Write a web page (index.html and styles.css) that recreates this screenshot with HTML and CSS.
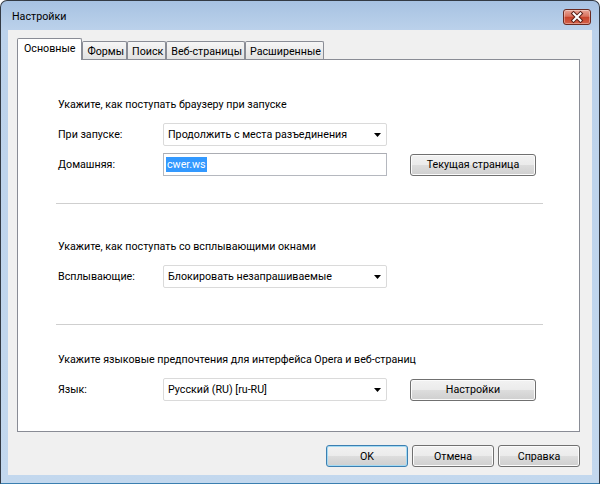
FILE: index.html
```html
<!DOCTYPE html>
<html lang="ru">
<head>
<meta charset="utf-8">
<title>Настройки</title>
<link rel="stylesheet" href="styles.css">
</head>
<body>
<div class="window">
  <div class="titlebar">
    <span class="title">Настройки</span>
    <div class="close">
      <svg width="26" height="14" viewBox="0 0 26 14">
        <path d="M9.5 3.5 L16.5 10.5 M16.5 3.5 L9.5 10.5" stroke="#5a2018" stroke-width="4" stroke-linecap="square" fill="none"/>
        <path d="M9.5 3.5 L16.5 10.5 M16.5 3.5 L9.5 10.5" stroke="#ffffff" stroke-width="2" stroke-linecap="square" fill="none"/>
      </svg>
    </div>
  </div>
  <div class="client">
    <div class="tabs">
      <div class="tab active">Основные</div>
      <div class="tab">Формы</div>
      <div class="tab">Поиск</div>
      <div class="tab">Веб-страницы</div>
      <div class="tab">Расширенные</div>
    </div>
    <div class="panel">
      <section class="group group-first">
        <div class="heading">Укажите, как поступать браузеру при запуске</div>
        <div class="row">
          <span class="label">При запуске:</span>
          <div class="select"><span>Продолжить с места разъединения</span><svg class="arrow" width="7" height="4" viewBox="0 0 7 4"><path d="M0 0 H7 L3.5 4 Z" fill="#000"/></svg></div>
        </div>
        <div class="row row-gap">
          <span class="label">Домашняя:</span>
          <div class="input"><span class="selected-text">cwer.ws</span></div>
          <button class="btn side-btn">Текущая страница</button>
        </div>
      </section>
      <div class="sep"></div>
      <section class="group group-mid">
        <div class="heading">Укажите, как поступать со всплывающими окнами</div>
        <div class="row">
          <span class="label">Всплывающие:</span>
          <div class="select"><span>Блокировать незапрашиваемые</span><svg class="arrow" width="7" height="4" viewBox="0 0 7 4"><path d="M0 0 H7 L3.5 4 Z" fill="#000"/></svg></div>
        </div>
      </section>
      <div class="sep"></div>
      <section class="group group-last">
        <div class="heading">Укажите языковые предпочтения для интерфейса Opera и веб-страниц</div>
        <div class="row">
          <span class="label">Язык:</span>
          <div class="select"><span>Русский (RU) [ru-RU]</span><svg class="arrow" width="7" height="4" viewBox="0 0 7 4"><path d="M0 0 H7 L3.5 4 Z" fill="#000"/></svg></div>
          <button class="btn side-btn">Настройки</button>
        </div>
      </section>
    </div>
    <div class="footer">
      <button class="btn foot-btn default">OK</button>
      <button class="btn foot-btn">Отмена</button>
      <button class="btn foot-btn">Справка</button>
    </div>
  </div>
</div>
</body>
</html>
```

FILE: styles.css
```css
* { box-sizing: border-box; }
html, body { margin: 0; padding: 0; }
body {
  width: 600px;
  height: 484px;
  overflow: hidden;
  background: #ffffff;
  font-family: Roboto, "Noto Sans", sans-serif;
  font-size: 10.7px;
  color: #000;
}
.window {
  width: 600px;
  height: 484px;
  border: 1px solid #333a44;
  border-bottom-color: #3a7fb0;
  border-radius: 7px 7px 0 0;
  background: linear-gradient(to bottom, #a7c2e2 0px, #bcd2eb 30px, #c3d8ee 100%);
  display: flex;
  flex-direction: column;
}
.titlebar {
  height: 29px;
  flex: none;
  display: flex;
  align-items: center;
  padding: 2px 8px 0 11px;
}
.title { flex: 1; font-size: 10.7px; color: #000; }
.close {
  width: 28px;
  height: 16px;
  border: 1px solid #6b2a20;
  border-radius: 3px;
  background: linear-gradient(to bottom, #e9a597 0%, #d9725e 45%, #c7432b 52%, #d4614a 100%);
  box-shadow: inset 0 0 0 1px rgba(255,255,255,0.35);
  display: flex;
  align-items: center;
  justify-content: center;
}
.client {
  flex: none;
  height: 445px;
  margin: 0 7px;
  background: #f0f0f0;
  display: flex;
  flex-direction: column;
  padding: 8px 12px 0 9px;
}
.tabs {
  display: flex;
  align-items: flex-end;
  height: 21px;
  position: relative;
  z-index: 1;
}
.tab {
  height: 18px;
  border: 1px solid #898c95;
  border-bottom: none;
  border-radius: 2px 2px 0 0;
  background: linear-gradient(to bottom, #f6f6f6, #e2e2e2);
  padding: 1px 2px 0 4px;
  line-height: 17px;
  white-space: nowrap;
}
.tab.active {
  height: 22px;
  margin-bottom: -1px;
  background: #ffffff;
  padding: 0 6px;
  line-height: 20px;
  position: relative;
  z-index: 2;
}
.panel {
  height: 373px;
  background: #ffffff;
  border: 1px solid #898c95;
  padding: 0 36px 0 40px;
}
.group-first { padding-top: 37px; padding-bottom: 27px; }
.group-mid { padding-top: 35px; padding-bottom: 36px; }
.group-last { padding-top: 27px; }
.heading {
  height: 16px;
  line-height: 16px;
  margin-bottom: 10px;
  white-space: nowrap;
}
.row {
  display: flex;
  align-items: center;
  height: 23px;
}
.row-gap { margin-top: 7px; }
.label { width: 105px; flex: none; }
.select {
  width: 224px;
  height: 23px;
  flex: none;
  border: 1px solid #dadada;
  border-radius: 2px;
  background: #ffffff;
  padding: 0 5px 0 4px;
  display: flex;
  align-items: center;
  justify-content: space-between;
}
.arrow { display: block; }
.input {
  width: 224px;
  height: 23px;
  flex: none;
  border: 1px solid #b5b8bf;
  border-top-color: #abadb3;
  background: #ffffff;
  padding: 0 0 0 2px;
  display: flex;
  align-items: center;
}
.selected-text {
  background: #3399ff;
  color: #ffffff;
  padding: 0 1px;
  line-height: 15px;
}
.sep {
  height: 1px;
  margin-left: -2px;
  background: #cfcfcf;
}
.btn {
  font-family: inherit;
  font-size: 10.7px;
  color: #000;
  height: 22px;
  border: 1px solid #707070;
  border-radius: 3px;
  background: linear-gradient(to bottom, #f2f2f2 0%, #ebebeb 50%, #dddddd 50%, #cfcfcf 100%);
  box-shadow: inset 0 0 0 1px #fbfbfb;
  padding: 0;
}
.side-btn { width: 126px; margin-left: 23px; }
.footer {
  display: flex;
  justify-content: flex-end;
  gap: 4px;
  margin-top: 13px;
}
.foot-btn { width: 82px; }
.btn.default {
  border-color: #3c7fb1;
  box-shadow: inset 0 0 0 1px #a4daf3;
}
```
